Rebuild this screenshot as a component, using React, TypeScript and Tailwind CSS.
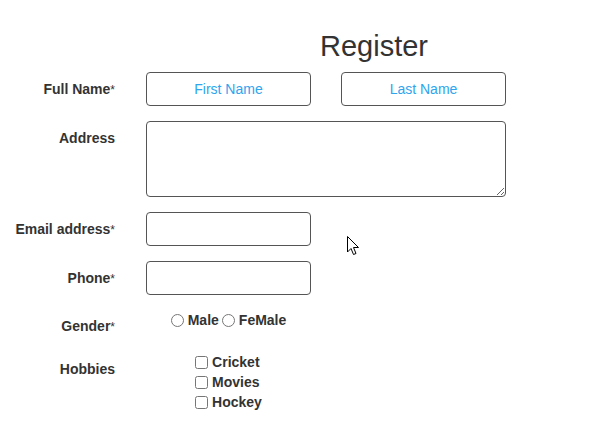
import React from 'react';

function Label({ text, required, className = '' }: { text: string; required?: boolean; className?: string }) {
  return (
    <div className={`w-[115px] shrink-0 text-right text-[14px] leading-[20px] font-bold text-[#333] ${className}`}>
      {text}
      {required && <span className="font-normal text-[12px]">*</span>}
    </div>
  );
}

const inputCls =
  'h-[34px] rounded-[4px] border border-[#555] bg-white px-2 text-center text-[14px] text-[#333] outline-none placeholder:text-[#2ea5ee]';

export default function App() {
  return (
    <div className="relative h-[422px] w-[590px] bg-white font-['Liberation_Sans',Arial,sans-serif]">
      <div className="pt-[29px]">
        <h1 className="ml-[320px] h-[34px] text-[29px] leading-[34px] font-normal text-[#333]">Register</h1>

        <div className="mt-[9px] flex items-center">
          <Label text="Full Name" required />
          <input className={`${inputCls} ml-[31px] w-[165px]`} placeholder="First Name" />
          <input className={`${inputCls} ml-[30px] w-[165px]`} placeholder="Last Name" />
        </div>

        <div className="mt-[15px] flex items-start">
          <Label text="Address" className="pt-[7px]" />
          <textarea className="ml-[31px] block h-[76px] w-[360px] rounded-[4px] border border-[#555] bg-white outline-none" />
        </div>

        <div className="mt-[15px] flex items-center">
          <Label text="Email address" required />
          <input className={`${inputCls} ml-[31px] w-[165px]`} />
        </div>

        <div className="mt-[15px] flex items-center">
          <Label text="Phone" required />
          <input className={`${inputCls} ml-[31px] w-[165px]`} />
        </div>

        <div className="mt-[15px] flex items-start">
          <Label text="Gender" required className="pt-[6px]" />
          <div className="ml-[31px] flex w-[165px] items-center justify-center text-[14px] leading-[20px] font-bold text-[#333]">
            <label className="flex items-center">
              <input type="radio" name="gender" className="m-0 h-[13px] w-[13px]" />
              <span className="ml-[4px]">Male</span>
            </label>
            <label className="ml-[3px] flex items-center">
              <input type="radio" name="gender" className="m-0 h-[13px] w-[13px]" />
              <span className="ml-[4px]">FeMale</span>
            </label>
          </div>
        </div>

        <div className="mt-[15px] flex items-start">
          <Label text="Hobbies" className="pt-[7px]" />
          <div className="ml-[31px] flex w-[165px] justify-center">
            <div className="flex flex-col text-[14px] leading-[20px] font-bold text-[#333]">
              {['Cricket', 'Movies', 'Hockey'].map((h) => (
                <label key={h} className="flex items-center">
                  <input type="checkbox" className="m-0 h-[13px] w-[13px]" />
                  <span className="ml-[4px]">{h}</span>
                </label>
              ))}
            </div>
          </div>
        </div>
      </div>

      <svg className="absolute left-[347px] top-[236px]" width="13" height="20" viewBox="0 0 13 20">
        <path d="M0.5 0.5 L0.5 16 L4 12.5 L6.5 18.5 L9 17.5 L6.5 11.5 L11.5 11.5 Z" fill="white" stroke="black" strokeWidth="1" strokeLinejoin="miter" />
      </svg>
    </div>
  );
}
